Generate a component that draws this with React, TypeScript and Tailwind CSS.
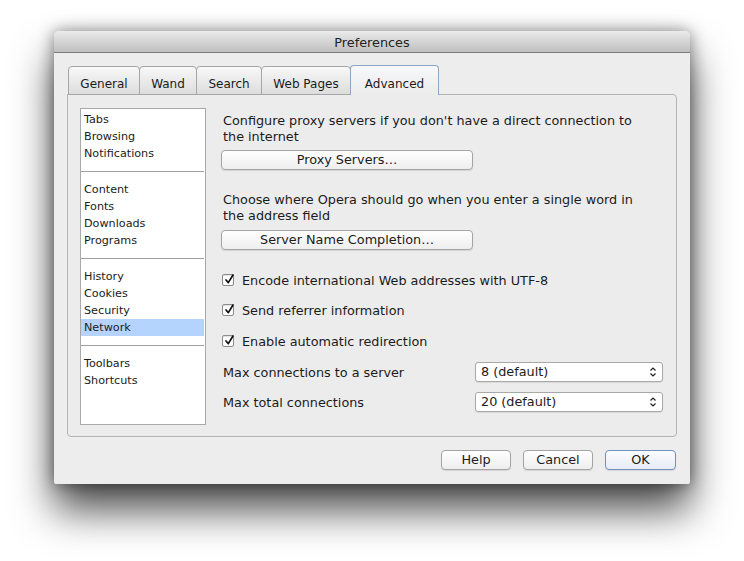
import React from "react";

const Check = () => (
  <span className="relative w-[12px] h-[12px] bg-white border border-[#8c8c8c] rounded-[2px] shadow-[inset_0_1px_1px_rgba(0,0,0,0.12)] shrink-0">
    <svg className="absolute left-[1px] top-[-2px]" width="11" height="12" viewBox="0 0 11 12">
      <path d="M2 7 L4.3 9.6 L9 2" fill="none" stroke="#111" strokeWidth="1.7" strokeLinecap="round" strokeLinejoin="round" />
    </svg>
  </span>
);

const Btn = ({ children, w, def }: { children: React.ReactNode; w: string; def?: boolean }) => (
  <div
    className={
      "h-[20px] flex items-center justify-center pt-px rounded-[4px] border text-[12.8px] leading-none shadow-[0_1px_1px_rgba(0,0,0,0.1)] " +
      w +
      (def
        ? " border-[#7190bd] bg-gradient-to-b from-[#fbfcfe] to-[#e6ecf5]"
        : " border-[#a4a4a4] bg-gradient-to-b from-white to-[#eeeeee]")
    }
  >
    {children}
  </div>
);

const Select = ({ value }: { value: string }) => (
  <div className="w-[188px] h-[20px] flex items-center justify-between bg-white border border-[#a8a8a8] rounded-[3px] pl-[5px] pr-[5px] shadow-[0_1px_1px_rgba(0,0,0,0.08)]">
    <span className="text-[12.8px] leading-none pt-px">{value}</span>
    <svg width="8" height="12" viewBox="0 0 8 12">
      <path d="M1.5 4.5 L4 2 L6.5 4.5" fill="none" stroke="#222" strokeWidth="1.2" />
      <path d="M1.5 7.5 L4 10 L6.5 7.5" fill="none" stroke="#222" strokeWidth="1.2" />
    </svg>
  </div>
);

const Item = ({ label, sel }: { label: string; sel?: boolean }) => (
  <div className={"h-[17px] leading-[17px] pl-[3px] mr-px " + (sel ? "bg-[#b5d4fd]" : "")}>{label}</div>
);

const Sep = () => <div className="my-[9px] h-px bg-[#a0a0a0] mr-px" />;

const tabs = [
  { label: "General", w: "w-[72px]" },
  { label: "Wand", w: "w-[58px]" },
  { label: "Search", w: "w-[66px]" },
  { label: "Web Pages", w: "w-[90px]" },
];

export default function App() {
  return (
    <div className="w-[744px] h-[561px] bg-white overflow-hidden pl-[54px] pt-[31px] font-['DejaVu_Sans',sans-serif] text-[#1b1b1b]">
      <div className="w-[636px] h-[453px] bg-[#ededed] rounded-t-[5px] rounded-b-[2px] flex flex-col shadow-[0_26px_40px_rgba(0,0,0,0.7),0_0_16px_rgba(0,0,0,0.45)]">
        <div className="h-[22px] shrink-0 flex items-center justify-center pt-[2px] rounded-t-[5px] border-b border-[#7e7e7e] bg-gradient-to-b from-[#ebebeb] to-[#bfbfbf] text-[12.8px] text-[#222]">
          Preferences
        </div>
        <div className="flex-1 flex flex-col px-[13px] pt-[12px] pb-[14px]">
          <div className="h-[30px] flex items-end pl-px -mb-px relative z-10">
            {tabs.map((t, i) => (
              <div
                key={t.label}
                className={
                  "h-[29px] flex items-center justify-center pt-[7px] border border-[#a6a6a6] rounded-t-[4px] bg-gradient-to-b from-[#f8f8f8] to-[#dddddd] text-[12px] " +
                  t.w +
                  (i > 0 ? " -ml-px" : "")
                }
              >
                {t.label}
              </div>
            ))}
            <div className="h-[30px] w-[89px] -ml-px flex items-center justify-center pt-[7px] border border-b-0 border-[#8ea6c4] rounded-t-[4px] bg-gradient-to-b from-[#f6f8fb] to-[#ececec] text-[12px]">
              Advanced
            </div>
          </div>
          <div className="h-[343px] shrink-0 flex border border-[#b3b3b3] rounded-[4px] rounded-tl-none bg-[#ececec] pl-[12px] pr-[13px] pt-[13px] pb-[11px]">
            <div className="w-[126px] bg-white border border-[#a9a9a9] pt-[2px] text-[11.2px]">
              <Item label="Tabs" />
              <Item label="Browsing" />
              <Item label="Notifications" />
              <Sep />
              <Item label="Content" />
              <Item label="Fonts" />
              <Item label="Downloads" />
              <Item label="Programs" />
              <Sep />
              <Item label="History" />
              <Item label="Cookies" />
              <Item label="Security" />
              <Item label="Network" sel />
              <Sep />
              <Item label="Toolbars" />
              <Item label="Shortcuts" />
            </div>
            <div className="flex-1 ml-[15px] pt-[5px] flex flex-col text-[12.8px]">
              <p className="leading-[16px] pl-[2px]">
                Configure proxy servers if you don't have a direct connection to
                <br />
                the internet
              </p>
              <div className="mt-[5px]">
                <Btn w="w-[252px]">Proxy Servers…</Btn>
              </div>
              <p className="mt-[22px] leading-[16px] pl-[2px]">
                Choose where Opera should go when you enter a single word in
                <br />
                the address field
              </p>
              <div className="mt-[6px]">
                <Btn w="w-[252px]">Server Name Completion…</Btn>
              </div>
              <div className="mt-[20px] h-[20px] flex items-center pl-[1px] gap-[8px]">
                <Check />
                <span className="pt-px">Encode international Web addresses with UTF-8</span>
              </div>
              <div className="mt-[10px] h-[20px] flex items-center pl-[1px] gap-[8px]">
                <Check />
                <span className="pt-px">Send referrer information</span>
              </div>
              <div className="mt-[11px] h-[20px] flex items-center pl-[1px] gap-[8px]">
                <Check />
                <span className="pt-px">Enable automatic redirection</span>
              </div>
              <div className="mt-[11px] h-[20px] flex items-center justify-between">
                <span className="pl-[2px] pt-px">Max connections to a server</span>
                <Select value="8 (default)" />
              </div>
              <div className="mt-[10px] h-[20px] flex items-center justify-between">
                <span className="pl-[2px] pt-px">Max total connections</span>
                <Select value="20 (default)" />
              </div>
            </div>
          </div>
          <div className="mt-[13px] flex justify-end gap-[12px] pr-px">
            <Btn w="w-[70px]">Help</Btn>
            <Btn w="w-[70px]">Cancel</Btn>
            <Btn w="w-[71px]" def>
              OK
            </Btn>
          </div>
        </div>
      </div>
    </div>
  );
}
